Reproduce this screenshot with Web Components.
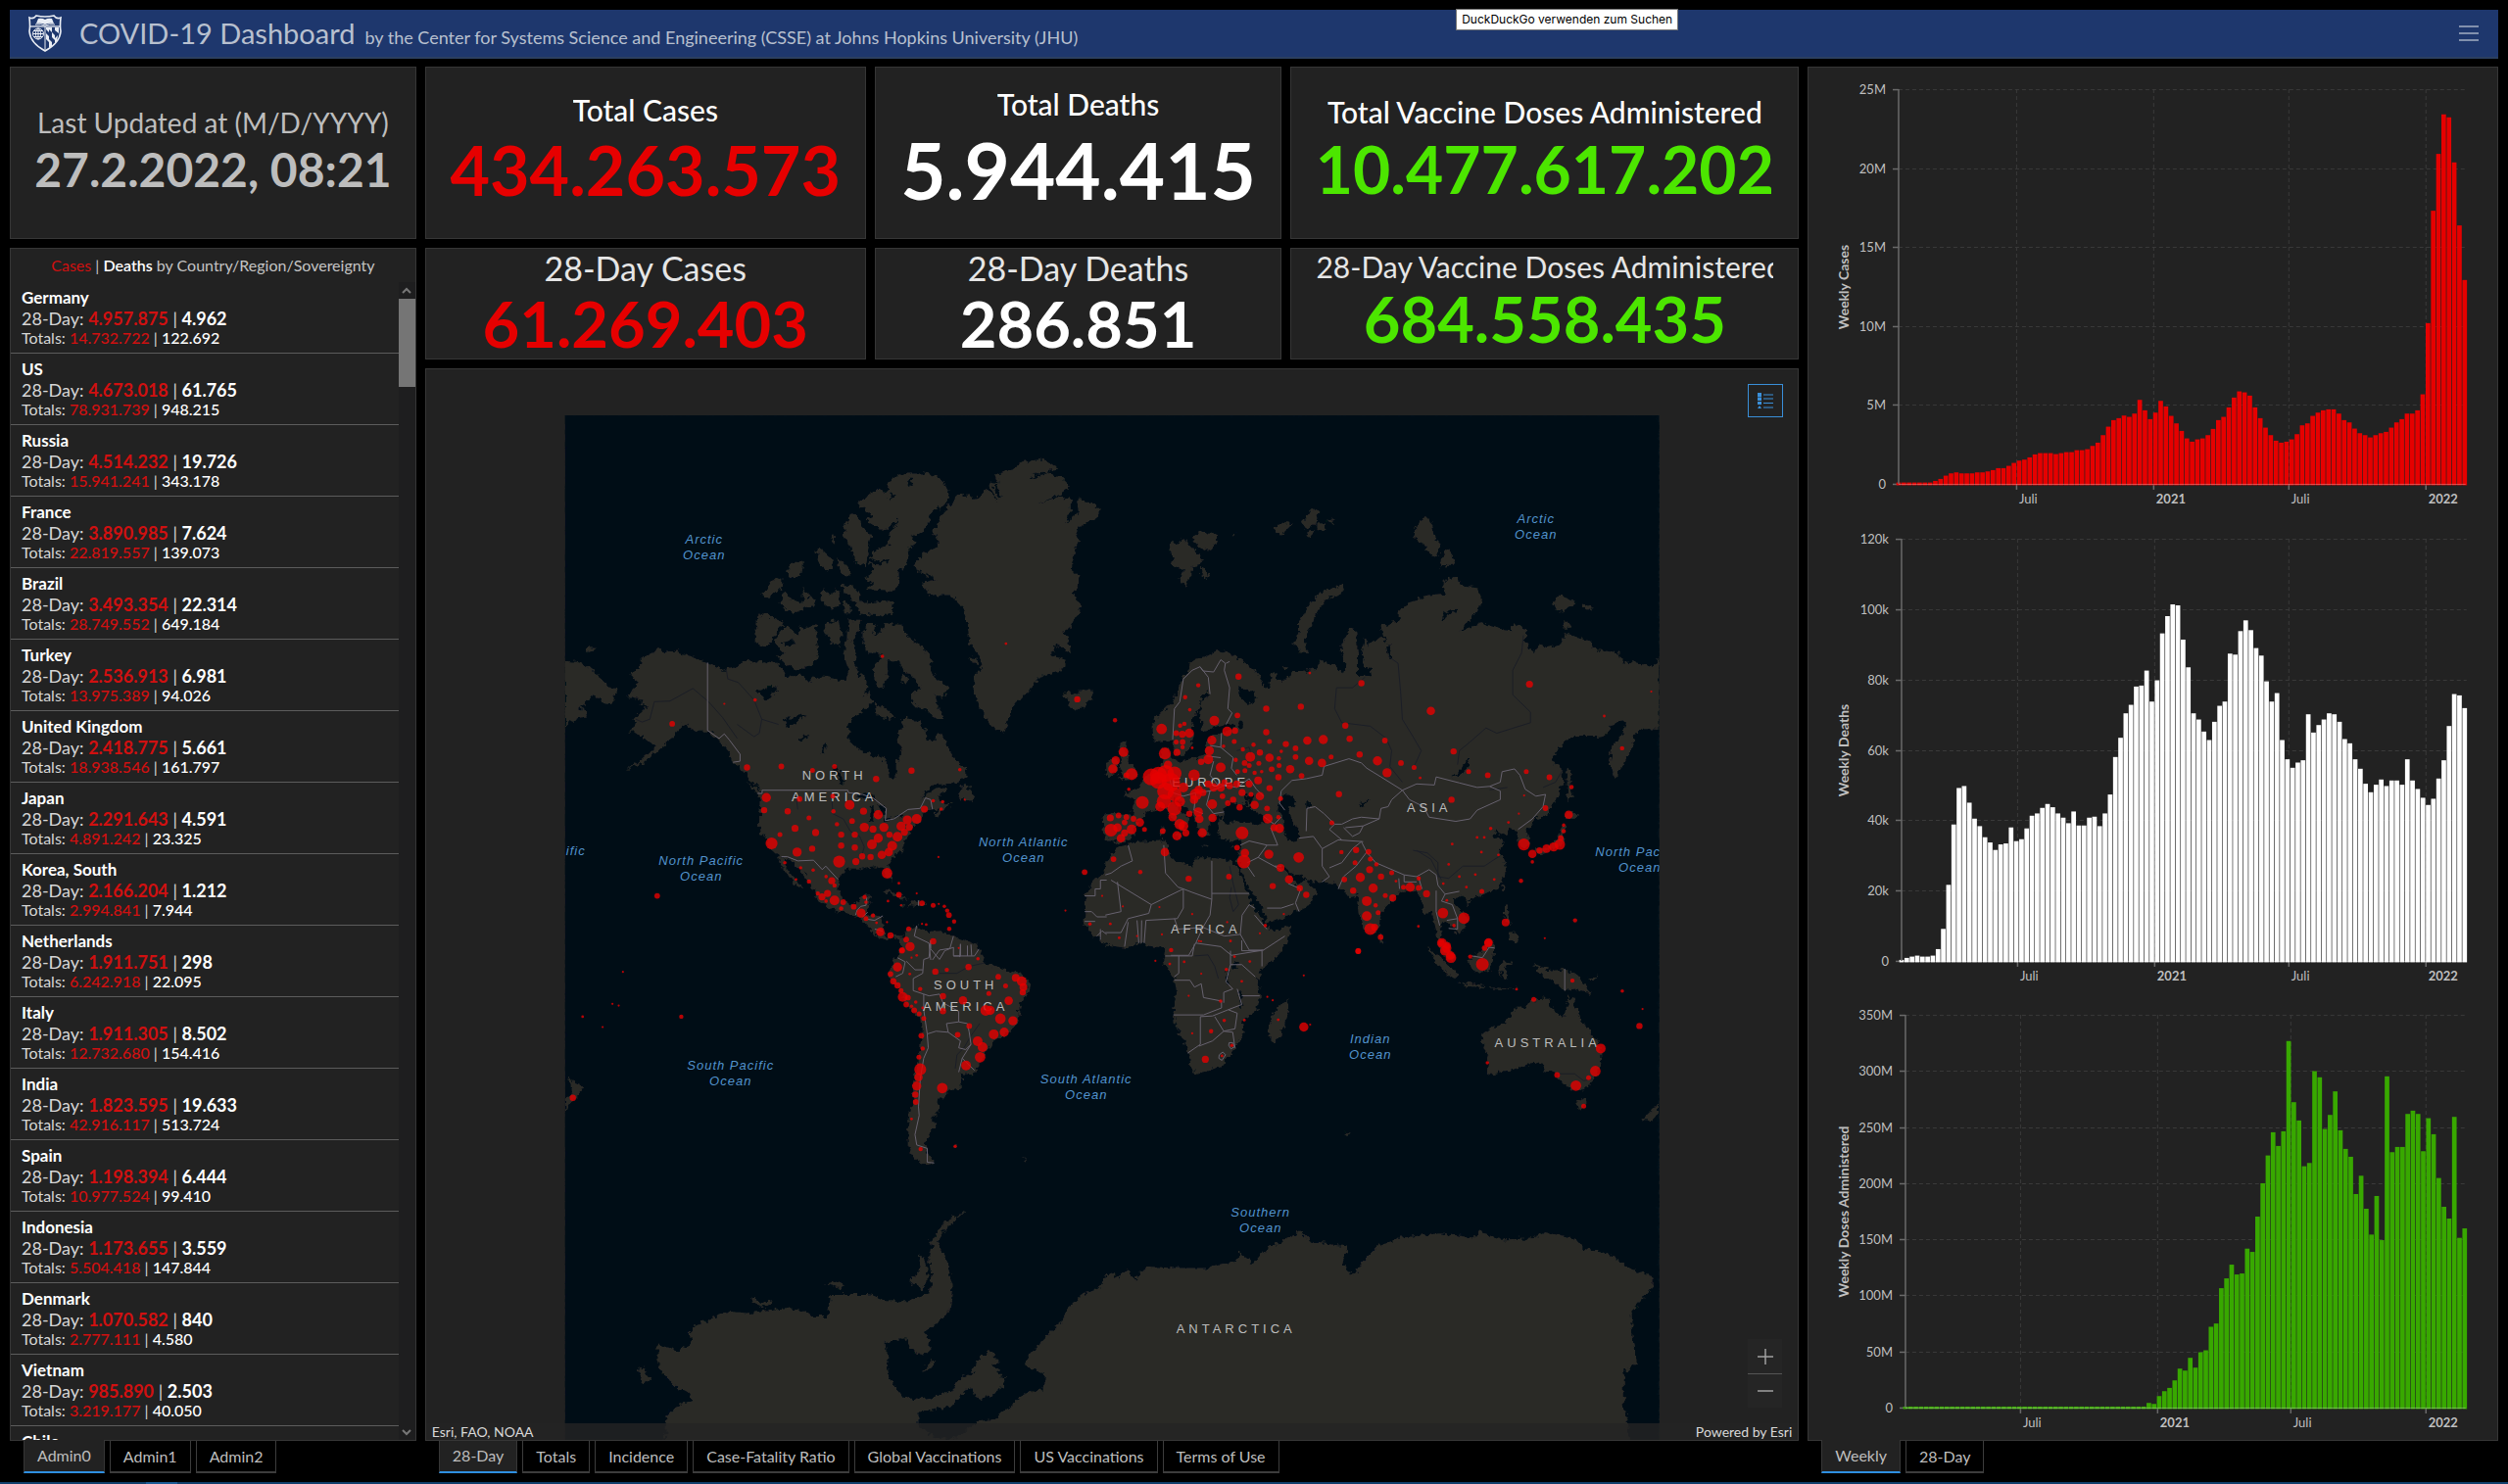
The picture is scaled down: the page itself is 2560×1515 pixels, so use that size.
<!DOCTYPE html>
<html lang="en">
<head>
<meta charset="utf-8">
<title>COVID-19 Dashboard</title>
<style>
  html, body { margin: 0; height: 100%; background: #000; overflow: hidden; }
  body { font-family: Lato, "Open Sans", sans-serif; color: #bdbdbd; }
</style>
</head>
<body>
<covid-dashboard></covid-dashboard>

<script>
const define = (name, html, setup) => {
  const template = document.createElement('template');
  template.innerHTML = html;
  customElements.define(name, class extends HTMLElement {
    constructor() {
      super();
      this.attachShadow({ mode: 'open' }).append(template.content.cloneNode(true));
    }
    connectedCallback() {
      if (setup && !this.ready) { this.ready = true; setup(this, this.shadowRoot); }
    }
  });
};

/* ---------- header ---------- */
define('dash-header', `
<style>
  :host { display: flex; align-items: center; height: 50px; box-sizing: border-box; padding: 0 18px 0 18px;
          background: #1e376d; border-bottom: 2px solid #2b3f60; color: #b8c0cf; position: relative; }
  .logo { width: 36px; height: 38px; margin-right: 17px; flex: none; }
  h1 { display: flex; align-items: baseline; gap: 10px; margin: 0; padding-top: 4px; font-weight: 400; font-size: 29px; line-height: 36px; flex: 1; }
  small { font-size: 18px; }
  button { background: none; border: 0; padding: 0; width: 24px; height: 24px; color: #a3aec2; }
  .tip { position: absolute; left: 58%; top: -1px; margin-left: 3px; background: #fff; color: #000;
         border: 1px solid #767676; box-sizing: border-box; height: 22px; line-height: 20px; padding: 0 5px;
         font-family: Inter, "Open Sans", sans-serif; font-size: 12px; white-space: nowrap; }
</style>
<svg class="logo" viewBox="0 0 36 38" aria-hidden="true">
  <path d="M2 3 Q6 5 9 1 Q18 3 27 1 Q30 5 34 3 Q33 12 34 17 Q33 29 18 37 Q3 29 2 17 Q3 12 2 3Z" fill="#1e376d" stroke="#e9edf4" stroke-width="1.6"/>
  <path d="M3 12H33" stroke="#e9edf4" stroke-width="1.3"/>
  <path d="M9 9 L11 4 Q15 3 18 5 Q21 3 25 4 L27 9 Q22 8 18 10 Q14 8 9 9Z" fill="#e9edf4"/>
  <path d="M8 10 Q14 9 18 11 Q22 9 28 10" fill="none" stroke="#e9edf4"/>
  <path d="M18 12V36" stroke="#e9edf4" stroke-width="1"/>
  <g fill="none" stroke="#e9edf4"><circle cx="11" cy="19.500" r="5.500"/><ellipse cx="11" cy="19.500" rx="2.500" ry="5.500"/><path d="M11 14V25M5.500 19.500H16.500M6.500 16.500H15.500M6.500 22.500H15.500"/></g>
  <path d="M19 13h3v5l-3-3zM22 13h3v5l3 3v5l-3-3v-5l-3-3zM28 13h4v6l-4-3zM19 19l3 3v6l-3-3zM22 25l3 3v4l-3 2zM28 24l3-3-1 6-2 2z" fill="#e9edf4"/>
</svg>
<h1><span>COVID-19 Dashboard</span><small>by the Center for Systems Science and Engineering (CSSE) at Johns Hopkins University (JHU)</small></h1>
<button type="button" aria-label="Menu"><svg width="24" height="24" viewBox="0 0 24 24"><path d="M2 5H22M2 12H22M2 19H22" stroke="currentColor" stroke-width="1.500"/></svg></button>
<span class="tip" role="tooltip">DuckDuckGo verwenden zum Suchen</span>
`);

/* ---------- indicator card ---------- */
define('stat-card', `
<style>
  :host { display: flex; flex-direction: column; align-items: center; justify-content: center; min-width: 0;
          box-sizing: border-box; padding: 0 25px 6px; background: #222; border: 1px solid #363636; text-align: center; overflow: hidden; }
  .label, .value { flex: none; white-space: nowrap; }
  .label { font-size: 30px; line-height: 40px; color: #fff; font-weight: 500; max-width: 100%; overflow: hidden; }
  .value { font-size: 70px; line-height: 82px; font-weight: 700; color: #fff; }
  :host([tone=red]) .value { color: #e60000; }
  :host([tone=green]) .value { color: #4ce600; }
  :host([size=xl]) .value { font-size: 80px; line-height: 94px; }
  :host([size=m]) .value { font-size: 66px; line-height: 78px; }
  :host([size=row]), :host([size=wide]) { padding-bottom: 0; }
  :host([size=row]) .label, :host([size=wide]) .label { color: #e6e6e6; font-weight: 400; }
  :host([size=row]) .label { font-size: 34px; }
  :host([size=wide]) .label { line-height: 34px; }
  :host([size=row]) .value, :host([size=wide]) .value { font-size: 65px; line-height: 72px; }
  :host([size=wide]) { padding-bottom: 4px; }
  :host([size=date]) { padding-left: 20px; padding-right: 20px; }
  :host([size=date]) .label { color: #bdbdbd; font-weight: 400; font-size: 28px; }
  :host([size=date]) .value { color: #bdbdbd; font-size: 48px; line-height: 56px; }
</style>
<div class="label"><slot name="label"></slot></div>
<div class="value"><slot></slot></div>
`);

/* ---------- country list ---------- */
const countries = `Germany;4.957.875;4.962;14.732.722;122.692
US;4.673.018;61.765;78.931.739;948.215
Russia;4.514.232;19.726;15.941.241;343.178
France;3.890.985;7.624;22.819.557;139.073
Brazil;3.493.354;22.314;28.749.552;649.184
Turkey;2.536.913;6.981;13.975.389;94.026
United Kingdom;2.418.775;5.661;18.938.546;161.797
Japan;2.291.643;4.591;4.891.242;23.325
Korea, South;2.166.204;1.212;2.994.841;7.944
Netherlands;1.911.751;298;6.242.918;22.095
Italy;1.911.305;8.502;12.732.680;154.416
India;1.823.595;19.633;42.916.117;513.724
Spain;1.198.394;6.444;10.977.524;99.410
Indonesia;1.173.655;3.559;5.504.418;147.844
Denmark;1.070.582;840;2.777.111;4.580
Vietnam;985.890;2.503;3.219.177;40.050
Chile`.split('\n').map(r => r.split(';'));

define('country-list', `
<style>
  :host { display: flex; flex-direction: column; min-height: 0; box-sizing: border-box; background: #222; border: 1px solid #363636; }
  h2 { margin: 0; font-size: 16px; line-height: 34px; font-weight: 400; text-align: center; color: #c4c4c4; }
  h2 b { font-weight: 600; color: #fff; } h2 i { font-style: normal; color: #d01010; }
  .body { flex: 1; min-height: 0; display: flex; }
  ul { flex: 1; margin: 0; padding: 0; list-style: none; overflow: hidden; }
  li { height: 73px; box-sizing: border-box; border-bottom: 1px solid #5c5c5c; padding: 6px 11px; color: #d6d6d6; }
  .name { font-weight: 700; color: #fff; font-size: 17px; line-height: 20px; }
  .d28 { font-size: 18px; line-height: 22px; } .tot { font-size: 16px; line-height: 17px; }
  .d28 b { font-weight: 700; } .tot b { font-weight: 500; }
  b { color: #fff; } b.c { color: #d01010; }
  .bar { width: 17px; background: #1e1e1f; display: flex; flex-direction: column; }
  .bar button { height: 17px; padding: 0; border: 0; background: none; color: #777; display: grid; place-items: center; }
  .thumb { height: 90px; background: #757575; } .rest { flex: 1; }
</style>
<h2><i>Cases</i> | <b>Deaths</b> by Country/Region/Sovereignty</h2>
<div class="body"><ul></ul>
  <div class="bar">
    <button type="button" aria-label="Scroll up"><svg width="10" height="8" viewBox="0 0 10 8"><path d="M1 6 5 2 9 6" fill="none" stroke="currentColor" stroke-width="2"/></svg></button>
    <div class="thumb"></div><div class="rest"></div>
    <button type="button" aria-label="Scroll down"><svg width="10" height="8" viewBox="0 0 10 8"><path d="M1 2 5 6 9 2" fill="none" stroke="currentColor" stroke-width="2"/></svg></button>
  </div>
</div>
`, (host, root) => {
  root.querySelector('ul').innerHTML = countries.map(([n, c, d, tc, td]) =>
    `<li><div class="name">${n}</div>` + (c ? `<div class="d28">28-Day: <b class="c">${c}</b> | <b>${d}</b></div><div class="tot">Totals: <b class="c">${tc}</b> | <b>${td}</b></div>` : '') + '</li>').join('');
});

/* ---------- tabs ---------- */
define('tab-strip', `
<style>
  :host { display: block; height: 33px; padding-left: 14px; }
  nav { display: flex; gap: 5px; height: 100%; }
  button { font: 400 16px/30px Lato, "Open Sans", sans-serif; color: #bdbdbd; background: #000; padding: 0 13px; box-sizing: border-box;
           border: 1px solid #3c3c3c; border-top: 0; border-bottom-width: 2px; white-space: nowrap; }
  button[aria-selected=true] { background: #222; border-color: #363636; border-bottom: 2px solid #2f8fe0; margin-top: -1px; }
</style>
<nav role="tablist"></nav>
`, (host, root) => {
  root.querySelector('nav').innerHTML = host.getAttribute('items').split('|')
    .map((t, i) => `<button type="button" role="tab" aria-selected="${i === 0}">${t}</button>`).join('');
});

/* ---------- weekly bar chart ---------- */
define('weekly-chart', `
<style>
  :host { display: block; min-height: 0; }
  svg { display: block; width: 100%; height: 100%; }
  text { font: 400 13px Lato, "Open Sans", sans-serif; fill: #bfbfbf; }
  .b { font-weight: 700; } .title { font-size: 14px; font-weight: 700; }
  .grid { stroke: #3a3a3a; stroke-dasharray: 4 3; fill: none; }
  .axis { stroke: #6a6a6a; fill: none; stroke-width: 1.500; }
</style>
<svg viewBox="0 0 703 467" role="img"></svg>
`, (host, root) => {
  const a = n => +host.getAttribute(n);
  const left = a('left'), top = a('top'), base = a('base'), max = a('max'), unit = host.getAttribute('unit');
  const step = a('step'), color = host.getAttribute('color'), right = 670;
  const values = host.textContent.trim().split(/\s+/).map(Number);
  const pitch = (right - left) / (values.length - 1), h = base - top;
  let s = '';
  for (let v = 0; v <= max; v += step) {
    const y = Math.round(base - v / max * h);
    s += `<path class="grid" d="M${left} ${y}.500H672"/><path class="axis" d="M${left - 6} ${y}.500h6"/>` +
         `<text x="${left - 13}" y="${y + 5}" text-anchor="end">${v ? v + unit : 0}</text>`;
  }
  const marks = host.getAttribute('marks').split(' ').map(Number);
  ['Juli', '2021', 'Juli', '2022'].forEach((t, i) => {
    s += `<path class="grid" d="M${marks[i]}.500 ${top}V${base}"/><path class="axis" d="M${marks[i]}.500 ${base}v6"/>` +
         `<text x="${marks[i] + 3}" y="${base + 20}" class="${i % 2 ? 'b' : ''}">${t}</text>`;
  });
  const scale = a('scale');
  values.forEach((v, i) => {
    const bh = Math.max(v / scale * h, 1);
    s += `<rect x="${(left + i * pitch - 2.3).toFixed(2)}" y="${(base - bh).toFixed(2)}" width="4.7" height="${(bh + 1.5).toFixed(2)}" fill="${color}"/>`;
  });
  s += `<path class="axis" d="M${left} ${top}V${base}" /><path d="M${left} ${base}.500H671" stroke="#fff" stroke-opacity=".3"/>`;
  s += `<text class="title" transform="translate(41 ${a('mid')}) rotate(-90)" text-anchor="middle">${host.getAttribute('label')}</text>`;
  root.querySelector('svg').innerHTML = s;
});

/* ---------- world map ---------- */
const mapParts = [
  { x: 570, y: 420, sx: .3571, sy: .3571,
    land: `M20 714L55 716 80 725 105 747 130 768 140 785 165 790 172 800 160 815 152 835 130 832 118 820 95 812 80 835 60 850 78 855 82 872 55 878 38 888 20 902ZM76 685L90 672 108 675 106 684 85 688Z
M207 745L232 735 235 712 262 692 292 678 310 690 330 684 380 700 427 718 455 728 475 742 490 728 500 735 520 722 540 708 555 718 572 712 590 722 600 715 625 722 650 745 655 762 690 752 715 772 730 758 760 758 790 765 822 768 830 750 845 722 855 735 862 760 868 748 880 765 884 790 872 815 890 800 898 830 872 855 840 880 830 900 832 940 860 965 900 982 938 995 940 1030 950 1048 965 1045 967 1000 985 975 975 945 972 915 990 900 978 880 1010 878 1035 890 1050 910 1052 935 1072 945 1090 920 1110 950 1122 975 1140 1000 1165 1020 1168 1045 1130 1065 1075 1067 1050 1085 1035 1110 1060 1090 1085 1075 1115 1078 1100 1090 1085 1100 1100 1120 1128 1122 1105 1135 1085 1155 1072 1150 1090 1135 1060 1140 1045 1150 1038 1175 1015 1185 1005 1205 990 1225 985 1250 960 1275 942 1300 955 1325 955 1340 940 1340 928 1310 905 1300 875 1305 860 1310 825 1310 805 1330 800 1370 815 1400 850 1410 870 1385 895 1385 885 1415 885 1440 925 1442 930 1470 925 1490 940 1502 960 1495 985 1500 990 1515 960 1505 935 1512 905 1495 870 1455 845 1440 800 1430 745 1405 735 1375 700 1320 665 1285 640 1275 650 1300 680 1340 700 1362 690 1365 660 1330 635 1290 628 1270 600 1245 590 1215 575 1190 575 1150 580 1110 565 1085 585 1090 570 1070 545 1050 525 1020 500 1005 490 975 455 935 430 915 395 915 370 900 355 895 345 910 330 925 315 945 280 975 250 1000 190 1028 240 995 280 960 270 950 235 930 215 915 200 915 222 900 215 880 235 860 262 845 235 840 240 825 200 818 195 812 215 795 230 775 212 760Z
M570 585L590 580 640 598 648 612 625 625 610 655 590 675 580 668 563 655ZM617 655L640 625 655 612 690 640 690 615 710 622 728 605 742 608 738 640 745 690 735 720 710 732 680 738 655 725 625 700 650 692 632 680ZM585 522L610 485 640 475 640 500 620 520 600 535ZM630 545L650 515 670 540 700 545 700 500 715 530 738 540 725 560 700 565 670 580 650 562ZM653 460L670 435 700 422 700 445 695 470 670 475ZM738 400L750 395 785 425 790 445 770 458 750 440ZM797 418L825 440 835 470 805 465ZM745 520L760 505 775 525 800 510 803 555 780 565 760 550ZM815 545l20 5 3 25-20 0ZM812 495L840 500 860 520 870 548 960 540 955 575 920 583 860 578 850 545 820 520ZM782 355l10 0 2 14-8 6Z
M835 290L855 300 870 335 895 350 888 380 880 445 850 430 840 390 815 355 822 325ZM855 265L880 245 915 220 940 232 945 200 985 178 1045 178 1085 185 1120 225 1110 260 1060 315 1040 345 1010 360 1025 375 1000 395 1003 430 975 455 972 505 950 515 880 510 900 490 875 480 905 455 890 430 900 400 945 380 950 350 900 340 870 310 900 300Z
M762 610L785 598 805 600 812 640 800 670 780 660 765 630ZM828 598L865 595 860 625 840 655 850 700 850 740 830 740 815 690 825 650ZM885 605L910 605 900 650 925 625 935 608 985 610 990 635 1030 665 1068 705 1062 735 1085 765 1115 790 1100 820 1075 810 1090 850 1100 880 1070 870 1050 850 1020 840 1005 815 1035 790 1020 760 985 740 975 715 940 715 915 690 885 690 870 660 870 630ZM925 700L945 720 940 765 920 795 905 770 900 730ZM905 835L940 850 965 875 945 882 910 870ZM985 755l20 10-10 15-15-10ZM1140 1095L1165 1060 1175 1080 1192 1100 1185 1112 1145 1105ZM540 1062l30 15 12 15-15-2Z
M1120 265L1145 240 1185 235 1190 255 1225 220 1255 255 1230 200 1260 205 1250 180 1300 165 1330 145 1385 136 1430 162 1400 175 1440 190 1465 215 1440 235 1370 265 1425 245 1465 248 1465 285 1450 320 1490 285 1485 250 1525 262 1553 280 1535 310 1490 325 1480 345 1488 370 1470 420 1468 455 1492 470 1490 500 1470 520 1495 555 1480 590 1465 620 1440 630 1460 645 1465 695 1420 665 1410 700 1450 710 1440 740 1375 758 1360 785 1325 815 1295 850 1285 885 1272 920 1250 910 1225 880 1205 845 1187 800 1190 755 1210 735 1205 700 1175 665 1170 600 1155 560 1120 525 1065 525 1035 490 1080 480 1025 455 1020 430 1045 405 1090 385 1088 365 1068 350 1090 305ZM1440 815L1455 800 1475 810 1490 797 1525 797 1530 820 1490 855 1460 845 1465 828ZM1178 700l20 8 2 18-18-8Z
M920 1375L945 1367 975 1382 1000 1396 985 1397 945 1378ZM1010 1398L1035 1400 1055 1410 1030 1415 1005 1412ZM973 1411l20 2-8 4ZM965 1570L980 1540 985 1510 1000 1475 1025 1470 1060 1490 1100 1488 1130 1500 1160 1520 1195 1525 1215 1570ZM1572 1290L1550 1325 1530 1345 1505 1385 1508 1440 1505 1470 1530 1500 1572 1525Z`,
    water: `M565 800l25-8 15-8 25 2-8 20-15 4-12 14-12-6ZM640 878l30 0 20-12 18 4-20 12-20 16-12 2ZM685 940l15-14 22 2-12 8-20 8ZM752 975l10-25 8 4-8 24ZM782 1015l12-5 12 20 10 35-8 0-10-28ZM850 1098l28-8 22 8 4 12-30-4ZM893 1130l12-4-2 40-12 6ZM912 1120l20 8 2 20-12 4ZM930 1168l28-8 0 6-24 8ZM965 1158l24-6-2 6-22 4ZM1060 300l25-25 12 5-30 35ZM868 300l24 20 30 18 24-4 26-30-6 26-24 20-44-2-30-22ZM955 230l-12 22 4 4 14-22ZM1000 190l8 28 6-2-6-26ZM892 420l30 10 26-10-20 18-30-2ZM640 660l30-6 8 10-30 8ZM1245 210l14 40 6-4-10-36ZM1345 188l40-14 38-8-36 14-40 12Z`,
    borders: `M427 718V912L460 935 475 922 490 940 520 980 520 1000 500 1003M570 1092L583 1092 583 1083H828L830 1090 870 1095 900 1105 938 1135 935 1170 960 1165 1000 1138 1035 1135 1050 1105 1065 1110 1070 1138M638 1273L655 1273 685 1285 730 1283 755 1310 765 1300 800 1338M850 1440L855 1425 865 1415 880 1412 882 1390M870 1445L885 1432M885 1452L905 1455 928 1442M905 1480L928 1486M1025 1470L1018 1500 1060 1520 1065 1568M1130 1500L1120 1535 1090 1540 1070 1568M1030 1398V1413M1150 1522L1148 1560M1180 1524L1182 1556M1505 1385h30v-20h15v-25h18M1505 1430h20l15 15h28M1505 1458h30M1540 1500l15-15 13 10M1550 1510v-30`,
    rivers: `M222 880L240 888 262 880 275 830 320 828 385 792 430 830 470 875 512 935M480 735L485 765 515 775 560 825 582 880 575 920 560 930 512 895M582 880L630 895M680 1100L685 1138M782 1100L785 1150 815 1165 835 1200 862 1215 875 1245 868 1270`,
    dots: `326 893 8,540 1018 9,638 1015 8,727 1026 7,790 1015 7,909 1051 9,1010 1027 9,1148 1024 5,595 1104 13,589 1140 9,656 1143 9,690 1108 8,785 1100 7,833 1125 14,787 1143 6,717 1162 7,840 1171 8,873 1143 10,915 1153 13,797 1180 6,875 1189 13,900 1194 10,931 1189 13,980 1186 13,998 1168 13,1025 1165 14,1047 1137 10,1004 1189 10,990 1203 10,970 1216 14,947 1210 9,915 1220 13,897 1238 14,955 1242 14,945 1260 12,925 1268 12,893 1274 9,869 1272 9,851 1287 10,848 1247 9,848 1210 9,809 1210 9,809 1241 9,736 1204 10,677 1192 10,634 1210 7,610 1235 17,683 1260 13,726 1250 9,803 1287 17,940 1320 15,693 1305 5,729 1311 5,717 1344 6,766 1330 5,782 1342 10,790 1355 6,648 1290 5,680 1338 4,742 1378 6,754 1388 10,770 1378 10,766 1400 5,790 1398 14,815 1403 8,809 1421 6,845 1416 8,876 1388 6,880 1403 5,866 1434 13,880 1450 7,900 1441 6,921 1488 12,950 1498 9,974 1382 8,943 1400 4,1040 1406 8,1072 1412 7,1088 1408 3,1104 1415 5,1112 1427 6,1117 1440 8,1132 1458 6,1118 1479 6,974 1349 4,1087 1274 3,1072 1113 5,1099 1116 5,1095 1137 5,283 1385 8,1484 823 9,1505 1317 8,1280 664 4,475 836 3,563 825 5,927 700 5,1002 1479 7,995 1510 8,1006 1530 13,983 1540 8,1072 1515 9,1450 1427 3,1025 1555 4,1162 1110 3,1520 1465 5,1555 1385 3,910 1462 4,940 1460 3,1025 1378 3,980 1412 3,1040 1465 3,1052 1467 4` },
  { x: 1130, y: 420, sx: .3635, sy: .3571,
    land: `M180 375L200 380 215 362 225 378 240 385 250 400 270 425 260 440 240 445 225 505 205 480 215 455 180 435 190 420 175 400ZM240 360L265 340 290 350 313 352 305 385 280 397 255 385ZM262 445l20 5 8 20-12 12-15-18ZM470 335l25-20 28 5-20 20-15 15ZM548 320l30-45 15 15-5 30-25 20ZM590 320l18 0 2 18-18 2ZM620 310l20-5-5 18ZM560 350l20-10 0 12-15 6ZM355 352l10-6-3 10ZM880 310L900 297 915 330 918 355 935 370 932 415 905 405 890 378 868 370 862 345ZM935 450L945 405 962 392 980 438 955 440ZM525 660L540 625 540 600 565 555 600 520 650 500 665 495 670 510 645 525 610 540 590 575 575 610 560 640 557 670 568 692 545 690ZM1255 540L1270 525 1295 535 1320 548 1300 560 1275 573 1260 565ZM1335 550l30 10-5 12-25-10ZM1280 605l15-5 12 18-25 0ZM495 730l12 2-4 10Z
M128 885L155 860 185 830 205 780 230 730 245 708 270 705 310 685 345 690 380 712 410 735 435 765 430 795 400 800 370 785 375 820 400 840 420 820 410 790 440 780 455 790 460 750 475 745 478 765 500 770 520 745 550 745 590 735 600 710 640 725 665 750 670 725 655 680 670 650 680 620 700 625 705 690 705 760 725 755 745 760 740 735 725 730 715 690 725 645 735 670 770 645 790 665 795 690 770 615 820 600 820 570 860 540 905 525 950 520 945 490 970 468 990 485 1000 500 1040 505 1053 545 1025 590 990 630 1050 605 1100 620 1135 628 1140 605 1165 615 1185 640 1170 650 1200 690 1215 665 1235 675 1275 668 1285 635 1320 645 1360 655 1365 680 1440 690 1448 715 1500 720 1530 730 1551 710 1551 910 1510 908 1480 925 1475 960 1450 1010 1425 1052 1412 1000 1420 950 1450 920 1460 885 1425 890 1400 925 1380 930 1300 930 1245 1000 1275 1015 1283 1060 1260 1110 1240 1150 1200 1165 1180 1200 1188 1235 1165 1250 1155 1230 1150 1200 1130 1195 1120 1215 1095 1200 1080 1215 1105 1225 1120 1235 1100 1250 1115 1275 1122 1320 1100 1360 1060 1380 1035 1390 1010 1400 1000 1385 975 1390 975 1405 1000 1430 1015 1455 1005 1480 985 1495 970 1470 945 1460 935 1475 940 1510 960 1540 975 1570 955 1570 930 1520 925 1480 910 1430 890 1435 885 1400 870 1375 850 1370 830 1372 800 1400 770 1430 765 1470 745 1495 730 1490 710 1440 705 1385 680 1390 660 1365 640 1350 600 1345 560 1340 545 1325 520 1320 495 1300 485 1285 500 1310 520 1335 535 1355 560 1340 565 1345 590 1375 570 1410 530 1430 480 1455 450 1462 440 1430 405 1370 380 1315 375 1300 365 1285 375 1245 380 1225 350 1230 320 1225 310 1185 325 1150 300 1165 285 1180 285 1215 265 1215 250 1170 230 1140 210 1120 185 1100 190 1125 215 1150 235 1165 220 1180 215 1210 195 1180 165 1140 150 1130 130 1140 110 1145 100 1165 80 1185 70 1220 40 1235 10 1225 -5 1225 -12 1160 10 1150 70 1155 75 1110 50 1090 85 1080 110 1040 150 1020 155 985 150 970 170 960 180 990 200 1000 250 990 275 985 280 950 290 930 320 920 360 905 355 890 320 900 270 915 262 875 265 830 290 810 285 800 265 810 262 845 245 870 240 900 245 930 235 960 215 985 195 985 180 940 160 945 135 945 130 920Z
M30 970L40 945 55 945 50 965 62 980 60 1000 80 1020 88 1040 60 1055 30 1050 45 1040 35 1015 45 1000ZM-2 1005L20 990 32 995 30 1030 0 1045ZM1285 1165L1295 1140 1325 1155 1300 1170ZM1290 1180L1280 1240 1220 1265 1195 1255 1240 1245 1270 1215 1280 1180ZM1292 1020L1305 1030 1300 1075 1308 1100 1295 1118 1293 1070ZM765 1490l12 8 0 20-10 2ZM150 1190l12-2-2 25-8 0ZM185 1210l25-3-3 15ZM265 1240l20 0-5 5ZM345 1243l15-3-5 8ZM1115 1410l10 0 2 30 12 25-12-5-12-20ZM1130 1490l20-5 8 25-12 12-15-8ZM1112 1350l8 5-5 22-6-8ZM1008 1402l16-2-4 12-10-2ZM897 1530l20 10 20 30-12 0Z
M-4 1290L20 1260 40 1240 80 1232 150 1228 165 1225 175 1270 200 1290 240 1300 250 1275 290 1275 340 1285 365 1295 385 1350 405 1400 420 1425 445 1470 465 1485 518 1472 505 1520 470 1570 170 1570 165 1535 130 1530 90 1520 60 1535 -4 1525Z`,
    water: `M325 1168L330 1135 345 1112 370 1125 395 1118 400 1135 440 1160 455 1172 420 1180 370 1172 340 1178ZM385 1100l30-8-5 18-15 5ZM485 1115L500 1092 525 1100 530 1125 510 1135 520 1170 540 1195 540 1225 510 1230 498 1200 495 1165 480 1140ZM970 1048L995 1025 1018 985 1020 1000 1000 1035ZM942 575l20-5 18-8 0 10-20 8-16 20ZM560 1115l10 0 0 18-10 0ZM710 1120l15-6 16 2-16 4-8 14ZM785 665l10 0 4 40-8 0ZM370 890l12 0 0 15-10 0ZM395 1115l14-5 0 8Z`,
    borders: `M185 938L190 850 205 830 215 765 240 740 262 730 270 742 300 745 320 710 333 720 330 740 345 790 340 850 352 862 335 895M262 730L285 760 290 808M335 720L345 715M322 920L320 960 355 990 350 1020 365 1040M290 955L320 960M280 985L320 990M300 1000L290 1040 310 1065 365 1075 400 1050M175 1040L185 1090 215 1100 250 1090 290 1085 330 1070M250 1090L245 1140 270 1150M290 1085L280 1125 300 1150 330 1145M400 1050L420 1080 440 1100M440 1158L470 1180 490 1160M460 1190L480 1240 450 1240 400 1228 375 1240M450 1240L425 1275 395 1290M425 1275L470 1300 490 1300M395 1300L415 1330M470 1300L490 1312M510 1350L545 1365 530 1405 540 1430M450 1420L490 1420 525 1408M490 1085L520 1055 560 1050 605 1040 610 1015 680 993 715 1005 730 1020 770 1045 830 1083 800 1110 790 1130 770 1135 765 1165 715 1160 690 1165M490 1085L485 1120 500 1140M560 1200L562 1135 585 1130 610 1150 640 1180 660 1180 690 1165M540 1220L580 1215 605 1250 605 1300 625 1330 605 1345M605 1250L650 1225 720 1230M640 1180L625 1195 660 1225M670 1190L720 1185 765 1165M625 1305L660 1290 690 1250 715 1230M665 1190L690 1215 710 1205 720 1185M830 1083L870 1065 920 1068 925 1045 990 1062 1040 1075 1075 1072 1105 1085 1105 1110 1040 1140 1020 1165 980 1172 905 1160 890 1130 850 1110 830 1083M1075 1072L1105 1060 1110 1030 1145 1022 1160 1040 1175 1080 1205 1100 1232 1095 1225 1130 1195 1165 1155 1195M715 1230L730 1260 755 1290 835 1325 870 1330 905 1310 925 1325 930 1355 950 1380 990 1372M835 1325L835 1345 870 1345M650 1365L665 1330 700 1300 730 1260M820 1335L822 1365M875 1330L885 1365M925 1370L925 1430 935 1470M950 1380L940 1400 970 1410 985 1450M955 1455L985 1450 985 1480 960 1478M60 1240L72 1285 40 1300 12 1320-4 1325M12 1340L125 1410 215 1365 240 1375 295 1395 295 1285M295 1378H400M160 1240L165 1320 200 1360 215 1365 215 1420 198 1450M30 1345L40 1430-4 1440M125 1410L118 1435 60 1450 40 1490-4 1490M198 1450L110 1455 105 1520M295 1395L290 1440 270 1475 200 1480 190 1450M270 1475L330 1500 375 1495 380 1440 400 1410 415 1420M375 1495L400 1540 440 1540 500 1500M270 1475L250 1520 320 1530 350 1555 440 1540M180 1555H230L250 1520M415 1440L440 1470 450 1480M85 1455L90 1520M98 1455L97 1520M60 1460L50 1530`,
    rivers: `M725 760L690 790 645 790 640 850 660 890 740 900 785 935 800 970 795 1015 830 1060M790 700L818 720 825 800 830 880 860 930 883 970 870 1000 860 1020M1170 640L1165 690 1140 740 1140 810 1190 860 1190 890 1095 920 1065 905 1020 945 990 970 985 1010M860 1255L900 1262 930 1290 930 1330 960 1335 1000 1300 1060 1300 1105 1270M870 1255L910 1280 940 1340M1280 1025L1260 1060 1225 1075M1075 1082L1125 1075M345 1300L355 1350 370 1410 355 1430 345 1390 350 1360M365 970L400 960 410 1000`,
    dots: `154 908 15,302 884 14,370 758 9,257 783 6,220 817 6,233 853 5,367 869 8,338 915 14,360 913 9,295 940 13,288 970 13,285 995 14,265 1002 9,320 1018 14,245 1040 16,232 920 13,212 923 10,218 893 6,206 898 6,195 920 8,195 945 7,213 945 8,197 975 10,213 960 6,240 962 4,23 883 6,47 974 14,25 998 12,17 1022 13,70 1037 17,55 1040 8,62 1080 5,163 978 17,100 1118 18,125 1045 24,145 1040 24,165 1035 24,190 1035 20,172 1010 12,145 1055 24,180 1060 26,165 1085 24,190 1095 20,160 1115 20,205 1115 15,190 1135 20,150 1130 14,185 1160 12,205 1180 15,215 1185 14,222 1205 10,197 1213 13,250 1095 17,215 1075 14,245 1110 12,270 1090 10,258 1082 12,257 1145 13,260 1165 12,232 1150 9,268 1205 13,296 1123 14,297 1162 12,325 1100 8,320 1075 12,345 1070 10,300 1075 12,285 1065 10,355 1110 9,340 1120 8,373 1132 9,380 1090 10,400 1065 10,365 1065 10,330 1060 8,425 1055 11,430 1100 12,415 1125 12,405 1095 7,457 1077 9,450 1135 8,452 1164 14,470 1190 10,485 1192 13,488 1107 7,482 1160 6,482 1046 9,515 1023 12,547 1042 8,568 999 12,604 1005 12,563 941 12,608 938 13,682 936 9,670 898 9,710 981 9,760 999 13,787 1033 13,826 1005 8,863 1018 7,781 941 8,630 988 7,715 777 9,545 844 9,448 850 9,448 917 9,457 944 7,503 951 9,530 963 8,530 988 8,490 972 5,412 953 6,403 988 14,430 975 9,457 990 12,483 992 6,484 1012 7,463 1023 8,387 1005 8,427 1006 7,400 1012 7,415 1033 6,435 1030 5,382 966 6,358 944 7,328 957 5,362 996 6,367 1030 7,388 1027 7,910 856 12,1187 780 10,1178 1030 7,1243 1046 8,1070 1040 8,1016 1030 7,974 972 9,968 1110 9,652 1094 9,1305 1074 6,1232 1134 8,1297 1153 12,1447 963 6,1529 801 3,1397 871 4,570 748 4,380 1205 18,455 1266 13,539 1275 15,488 1305 11,512 1338 12,542 1363 9,560 1382 9,466 1357 9,385 1287 19,388 1262 12,366 1247 8,343 1330 8,230 1336 9,94 1317 6,163 1260 12,19 1280 8,10 1162 10,33 1155 8,55 1160 8,75 1165 8,50 1175 8,93 1175 12,12 1197 18,70 1195 14,50 1205 10,40 1220 12,30 1190 12,106 1195 7,157 1200 8,632 1176 7,659 1260 6,700 1254 9,735 1259 8,740 1280 7,697 1290 7,738 1310 10,757 1295 6,770 1330 9,800 1319 7,712 1332 13,748 1363 13,692 1370 9,667 1338 8,730 1400 14,782 1384 7,803 1391 10,755 1412 6,730 1443 14,762 1433 7,740 1480 17,752 1475 10,769 1503 8,852 1360 13,876 1362 8,876 1335 6,833 1360 7,812 1343 4,898 1379 10,944 1434 15,1003 1449 16,1053 1372 7,706 1543 8,1120 1461 11,1072 1518 12,1315 1455 6,1163 1342 6,1171 1238 17,1195 1265 12,1215 1255 9,1235 1250 12,1255 1245 13,1272 1238 15,1275 1220 8,1283 1200 6,1283 1183 5,1195 1288 5,940 1520 9,955 1535 13,965 1555 12,445 1470 5,1040 1218 4,1078 1192 5,1100 1268 4,1035 1324 4,990 1330 4,960 1295 4,970 1237 4,1060 1218 4,1052 1260 4,1010 1360 4,1157 1150 3,1128 1175 4,1172 1098 3,1088 1338 4,945 1350 4,880 1048 4,875 1472 4,1230 1506 3,240 1437 3,338 1460 3,148 1417 3,45 1415 3,85 1500 3,155 1495 3,265 1515 3,430 1492 3,497 1437 3,10 1465 4,35 1505 4,975 1470 5,955 1398 4` },
  { x: 570, y: 960, sx: .3571, sy: .354,
    land: `M975-5L1150-5 1190 10 1210 40 1218 65 1265 80 1320 95 1348 120 1345 145 1320 185 1312 240 1275 278 1245 290 1225 320 1205 360 1185 388 1150 385 1158 400 1150 425 1110 432 1105 455 1090 460 1085 500 1065 515 1080 535 1060 560 1050 590 1060 620 1075 642 1045 645 1015 625 1000 590 998 545 1005 500 1015 460 1015 400 1030 340 1040 270 1035 225 1000 190 975 145 950 110 945 90 965 50 980 20ZM1128 592l15 0-5 8ZM28 390L45 410 72 422 60 445 35 470 22 492 20 460 38 440ZM1325 628l10 2 2 8Z
M305 1450L310 1370 335 1345 385 1325 370 1300 345 1295 310 1260 285 1225 285 1165 345 1185 380 1160 375 1130 400 1105 450 1085 485 1070 540 1075 610 1065 650 1060 700 1065 725 1085 770 1085 780 1020 820 1020 890 1020 940 1040 1000 1040 1060 1020 1068 980 1060 920 1070 880 1055 870 1075 855 1095 820 1165 780 1110 830 1085 870 1110 920 1128 1000 1120 1070 1075 1110 1045 1130 1062 1150 1060 1190 1035 1195 1005 1180 990 1145 935 1160 945 1260 985 1315 1030 1325 1080 1315 1130 1295 1140 1270 1185 1245 1195 1215 1230 1180 1260 1215 1235 1228 1270 1235 1250 1250 1280 1260 1275 1285 1215 1325 1190 1310 1175 1285 1120 1345 1030 1360 1030 1395 1070 1430 1130 1440 1170 1410 1200 1388 1250 1380 1330 1310 1375 1295 1385 1305 1390 1250 1340 1230 1335 1210 1400 1135 1440 1100 1455 1060 1500 1020 1550 1000 1572 960 1572 1450ZM225 1240l15-10 25 40-20 8ZM550 1025l30 20 30-5-15 20-40-15ZM765 990l30-8 28 12-20 10ZM1005 975L1030 965 1035 905 1055 940 1055 985 1040 1005 1005 985ZM1040 1240l30-28 10 0-15 20-20 12Z`,
    water: ``,
    borders: `M1065 0L1065 25 1090 55 1105 30 1130 20 1130 45 1150 45 1150 12M1170 15V45M1130 45L1190 45 1203 25M1065 0L1060 50 1045 55 1042 95 1015 110 1015 145 1045 155 1060 160 1090 155 1100 180 1145 205 1145 235 1170 240 1175 265 1180 300 1165 315 1145 310 1150 290 1115 265 1110 240 1145 235M995 60L1020 85 1042 85M970 50L992 62 985 95 965 105M1045 155L1045 200 1055 270 1080 262 1115 265M1055 270L1058 310 1045 340 1035 400 1030 480 1032 505 1020 560 1025 590 1055 600 1055 640 1075 642M1180 300L1155 340 1190 375M1155 340L1145 380`,
    rivers: `M1090 95L1140 95 1175 75 1220 65M1205 240L1180 275 1160 310 1140 330 1135 370`,
    dots: `970 77 13,950 97 8,958 118 9,970 130 9,985 163 14,1000 165 8,995 185 8,1018 202 8,1032 212 7,1045 225 7,1038 275 8,1042 312 6,1031 337 7,1035 372 17,1030 395 12,1025 420 13,1021 445 9,1022 466 8,1010 515 4,1036 602 6,1098 426 15,1166 361 14,1206 337 15,1213 308 14,1199 291 14,1245 271 14,1275 265 13,1300 232 13,1264 226 15,1222 202 15,1235 202 13,1288 174 12,1328 150 9,1330 135 11,1325 118 14,1308 108 11,1258 105 8,1279 131 7,1231 153 7,1173 77 9,1078 90 9,1111 85 6,1100 161 9,1100 204 9,1157 173 12,1175 247 8,1142 272 8,1035 140 6,1200 53 5,983 30 8,1135 594 5,352 220 6,155 183 3,173 188 3,185 91 3,127 250 3,70 220 4,42 454 9,1005 97 4,1022 178 5,1010 190 5,980 145 7,1042 195 4,1010 50 3,1145 22 3` },
  { x: 1130, y: 960, sx: .4592, sy: .354,
    land: `M120-5L395-5 385 35 345 85 335 120 340 160 335 200 300 235 305 265 285 310 255 365 225 375 195 388 185 350 180 310 150 235 148 205 155 150 150 105 125 65 130 20ZM400 170L405 195 385 280 370 293 360 280 362 240 370 205ZM710 15L735 40 760 75 780 95 780 112 760 100 735 70ZM735-2L755-2 775 45 770 55 745 30ZM778 120L810 125 845 130 842 136 800 132ZM805 55L830 35 850 0 862 5 860 50 850 90 830 95 812 85ZM872 75L880 60 900 65 895 72 882 78 893 108 884 108 878 88 874 108ZM850 136L910 138 912 142 850 140ZM950 68L970 80 990 90 1015 82 1045 100 1060 125 1080 152 1060 150 1040 140 1015 145 1000 125 975 105 955 80ZM1070 110l25-10-15 18Z
M835 270L850 255 885 240 895 215 915 190 925 195 948 170 985 168 985 190 1010 220 1018 215 1028 155 1045 190 1055 235 1085 280 1100 310 1098 350 1085 400 1060 430 1030 430 1005 400 1000 385 990 375 970 380 975 360 950 352 900 375 870 378 865 390 845 383 848 345 835 300ZM1043 457l24 3-5 25-12 2ZM1227 465L1215 485 1192 515 1210 525 1227 495ZM528 556l12 2-6 8Z
M-8 980L15 955 25 975 45 950 60 975 90 940 145 945 225 945 290 925 295 900 325 932 350 895 385 870 430 838 455 870 535 883 527 935 548 970 565 930 600 885 650 858 740 845 815 857 830 840 885 862 945 860 975 842 1045 865 1060 890 1120 905 1160 945 1215 970 1215 1000 1180 1050 1165 1080 1170 1160 1180 1215 1150 1245 1150 1350 1165 1450-8 1450Z`,
    water: `M280 62l12 0 0 20-12 0ZM265 90l4 0 3 40-5 0ZM293 148l5 0 5 45-5 0Z`,
    borders: `M130 45H190L195 10M160 45V95L150 105M150 115L185 115 195 135 210 125 215 165 255 175 255 195 215 215 148 215M275 30L275 70 265 120 280 140 260 150 260 180M300 70H275M300 70L330 105M300 0L300 30 345 30 345 75M300 160H340M290 140L300 185 270 200 235 218 208 220V300L180 325M270 200L290 210 285 255 260 262 240 220M260 262L235 290 205 305M272 295l8 0 4 12-8 6-5-10ZM250 330l8-8 6 8-8 16-7-6ZM260 262L280 265 285 310M1018 82V145M812 45L835 50 850 20 862 22`,
    rivers: `M195 45L225 42 240 75 248 110M1005 385L1040 385 1060 405 1080 400`,
    dots: `438 250 13,559 31 8,219 343 10,232 262 6,261 231 5,278 303 5,256 333 4,253 175 5,300 118 4,210 96 3,182 160 3,318 61 4,284 47 4,143 28 6,140 68 4,172 62 4,108 59 3,266 84 5,306 230 4,190 268 3,381 229 4,357 163 3,438 101 3,369 173 3,452 243 3,835 69 18,765 50 15,752 30 14,745 8 14,757 15 10,848 8 12,840 22 8,808 47 6,949 170 7,1098 312 14,1086 377 15,1043 419 15,1071 396 7,1001 388 8,1060 478 7,846 353 5,1035 116 6,1146 146 5,1184 247 9,1191 198 3,911 141 4,205 2 3,275 2 4` }
];
const oceans = [[719, 555, 'Arctic'], [719, 571, 'Ocean'], [1568, 534, 'Arctic'], [1568, 550, 'Ocean'], [716, 883, 'North Pacific'], [716, 899, 'Ocean'],
  [1045, 864, 'North Atlantic'], [1045, 880, 'Ocean'], [746, 1092, 'South Pacific'], [746, 1108, 'Ocean'], [1109, 1106, 'South Atlantic'], [1109, 1122, 'Ocean'],
  [1399, 1065, 'Indian'], [1399, 1081, 'Ocean'], [1287, 1242, 'Southern'], [1287, 1258, 'Ocean'], [588, 873, 'ific'], [1662, 874, 'North Pac'], [1674, 890, 'Ocean']];
const lands = [[852, 796, 'NORTH'], [852, 818, 'AMERICA'], [1236, 803, 'EUROPE'], [1459, 829, 'ASIA'], [1231, 953, 'AFRICA'],
  [986, 1010, 'SOUTH'], [986, 1032, 'AMERICA'], [1580, 1069, 'AUSTRALIA'], [1262, 1361, 'ANTARCTICA']];

define('world-map', `
<style>
  :host { display: block; position: relative; min-height: 0; box-sizing: border-box; background: #222; border: 1px solid #363636; overflow: hidden; }
  svg.map { display: block; width: 100%; height: 100%; }
  .ocean { font: italic 400 13px "Liberation Sans", sans-serif; letter-spacing: 1px; fill: #5293cd; }
  .cont { font: 400 13px "Liberation Sans", sans-serif; letter-spacing: 4px; fill: #bcbcbc; }
  .note { position: absolute; left: 0; right: 0; bottom: 0; display: flex; justify-content: space-between; padding: 0 6px;
          background: rgba(36,36,36,.8); color: #d8d8d8; font-size: 14px; line-height: 17px; }
  .legend { position: absolute; top: 15px; right: 15px; width: 36px; height: 34px; padding: 0; background: #222; border: 1px solid #3a8fd9; color: #3a8fd9; display: grid; place-items: center; }
  .zoom { position: absolute; right: 16px; bottom: 33px; width: 35px; display: flex; flex-direction: column; background: #252525; }
  .zoom button { height: 35px; padding: 0; border: 0; background: none; color: #a0a0a0; display: grid; place-items: center; }
  .zoom button + button { border-top: 1px solid #555; }
</style>
<svg class="map" viewBox="435 377 1401 1093" preserveAspectRatio="xMidYMin slice" role="img" aria-label="World map of cases">
  <defs>
    <clipPath id="frame"><rect x="577" y="424" width="1117" height="1050"/></clipPath>
    <filter id="coast" x="0" y="0" width="100%" height="100%"><feTurbulence type="fractalNoise" baseFrequency=".2" numOctaves="2" seed="4"/><feDisplacementMap in="SourceGraphic" scale="8" xChannelSelector="R" yChannelSelector="G"/></filter>
  </defs>
  <g clip-path="url(#frame)">
    <rect x="577" y="424" width="1117" height="1050" fill="#000e18"/>
    <g id="terrain" filter="url(#coast)"></g><g id="lines"></g><g id="names"></g><g id="dots" fill="#e60000" fill-opacity=".8"></g>
  </g>
</svg>
<button class="legend" type="button" aria-label="Legend"><svg width="18" height="18" viewBox="0 0 18 18" fill="currentColor"><path d="M1 1h4v4H1zM1 5.500h4v3.500H1zM1 10h4v3H1zM1 17l2-3 2 3z"/><path d="M7 3H17M7 7H17M7 11.500H17M7 16H17" stroke="currentColor" stroke-width="1.200"/></svg></button>
<div class="zoom">
  <button type="button" aria-label="Zoom in"><svg width="16" height="16" viewBox="0 0 16 16"><path d="M0 8H16M8 0V16" stroke="currentColor" stroke-width="1.500"/></svg></button>
  <button type="button" aria-label="Zoom out"><svg width="16" height="16" viewBox="0 0 16 16"><path d="M0 8H16" stroke="currentColor" stroke-width="1.500"/></svg></button>
</div>
<div class="note"><span>Esri, FAO, NOAA</span><span>Powered by Esri</span></div>
`, (host, root) => {
  const get = id => root.getElementById(id);
  const wrap = (p, inner) => `<g transform="translate(${p.x} ${p.y}) scale(${p.sx} ${p.sy})">${inner}</g>`;
  const line = 'fill="none" vector-effect="non-scaling-stroke"';
  get('terrain').innerHTML = '<rect x="577" y="424" width="1117" height="1050" fill="#000e18"/>' +
    mapParts.map(p => wrap(p, `<path d="${p.land}" fill="#2a2a28"/><path d="${p.water}" fill="#000e18"/>`)).join('');
  get('lines').innerHTML = mapParts.map(p => wrap(p,
    `<path ${line} d="${p.rivers}" stroke="#1b1e26"/><path ${line} d="${p.borders}" stroke="#67626f"/>`)).join('');
  get('names').innerHTML = oceans.map(([x, y, t]) => `<text class="ocean" x="${x}" y="${y}" text-anchor="middle">${t}</text>`).join('') +
    lands.map(([x, y, t]) => `<text class="cont" x="${x}" y="${y}" text-anchor="middle">${t}</text>`).join('');
  get('dots').innerHTML = mapParts.map(p => p.dots.split(',').map(d => {
    const [x, y, r] = d.trim().split(' ').map(Number);
    return `<circle cx="${(p.x + x * p.sx).toFixed(1)}" cy="${(p.y + y * p.sy).toFixed(1)}" r="${(r * .36).toFixed(1)}"/>`;
  }).join('')).join('');
});

/* ---------- page ---------- */
define('covid-dashboard', `
<style>
  :host { display: flex; flex-direction: column; height: 100vh; box-sizing: border-box; padding: 10px 10px 0; }
  main { flex: 1; min-height: 0; margin-top: 8px; display: grid; grid-template-columns: 415fr 1403fr 705fr; column-gap: 9px; }
  section { display: flex; flex-direction: column; min-width: 0; min-height: 0; }
  .top { height: 176px; margin-bottom: 9px; }
  .cards { display: grid; grid-template-columns: 450fr 416fr 519fr; gap: 9px; grid-template-rows: 176px 114px; margin-bottom: 9px; }
  .grow { flex: 1; }
  .charts { flex: 1; min-height: 0; box-sizing: border-box; background: #222; border: 1px solid #363636; display: grid; grid-template-rows: repeat(3, minmax(0, 1fr)); }
  footer { height: 2px; margin: 9px -10px 0; background: linear-gradient(90deg, #11406c 149px, #1c5c96 149px 181px, #11406c 181px); }
</style>
<dash-header></dash-header>
<main>
  <section>
    <stat-card class="top" size="date"><span slot="label">Last Updated at (M/D/YYYY)</span>27.2.2022, 08:21</stat-card>
    <country-list class="grow"></country-list>
    <tab-strip items="Admin0|Admin1|Admin2"></tab-strip>
  </section>
  <section>
    <div class="cards">
      <stat-card tone="red"><span slot="label">Total Cases</span>434.263.573</stat-card>
      <stat-card size="xl"><span slot="label">Total Deaths</span>5.944.415</stat-card>
      <stat-card size="m" tone="green"><span slot="label">Total Vaccine Doses Administered</span>10.477.617.202</stat-card>
      <stat-card size="row" tone="red"><span slot="label">28-Day Cases</span>61.269.403</stat-card>
      <stat-card size="row"><span slot="label">28-Day Deaths</span>286.851</stat-card>
      <stat-card size="wide" tone="green"><span slot="label">28-Day Vaccine Doses Administered</span>684.558.435</stat-card>
    </div>
    <world-map class="grow"></world-map>
    <tab-strip items="28-Day|Totals|Incidence|Case-Fatality Ratio|Global Vaccinations|US Vaccinations|Terms of Use"></tab-strip>
  </section>
  <section>
    <div class="charts">
      <weekly-chart label="Weekly Cases" color="#e60000" unit="M" max="25" step="5" scale="1208" left="92" top="22" base="425" mid="224" marks="212 352 490 630">
        4 4 4 4 4 4 4 9 15 25 32 35 32 32 32 35 35 38 42 48 48 55 64 71 74 81 90 94 94 94 91 94 97 97 103 103 106 116 126 149 175 195 201 209 205 215 257 225 198 218 254 237 208 185 162 139 129 136 139 149 168 195 205 234 264 283 280 270 234 201 172 149 132 126 129 136 152 179 185 208 218 225 228 228 215 195 188 169 155 149 142 149 155 159 172 188 198 215 215 225 274 492 836 1010 1131 1122 984 791 624
      </weekly-chart>
      <weekly-chart label="Weekly Deaths" color="#ffffff" unit="k" max="120" step="20" scale="1294" left="95" top="14" base="445" mid="230" marks="213 353 490 630">
        0 9 13 16 13 13 16 36 98 233 418 530 536 485 436 413 379 363 340 357 360 409 367 373 406 445 452 469 481 471 452 439 422 458 415 415 439 442 413 452 510 625 684 759 785 841 844 890 795 860 1004 1057 1093 1090 985 900 759 740 703 677 733 782 795 942 939 1011 1044 1014 959 936 857 795 821 677 618 592 608 615 756 700 723 740 759 756 733 680 667 618 589 543 517 540 556 536 553 553 540 618 553 527 500 478 497 559 615 720 818 814 775
      </weekly-chart>
      <weekly-chart label="Weekly Doses Administered" color="#38a800" unit="M" max="350" step="50" scale="1201" left="99" top="33" base="434" mid="234" marks="216 356 492 630">
        0 0 0 0 0 0 0 0 0 0 0 0 0 0 0 0 0 0 0 0 0 0 0 0 0 0 0 0 0 0 0 0 0 0 0 0 0 0 0 0 0 0 0 0 0 0 0 14 11 35 50 60 83 119 113 152 122 169 175 247 257 365 395 437 407 410 486 476 584 686 771 842 800 845 1121 934 878 738 748 1029 1010 852 895 967 848 791 767 653 709 608 529 647 512 1013 781 797 797 898 908 898 784 885 836 702 614 578 889 519 548
      </weekly-chart>
    </div>
    <tab-strip items="Weekly|28-Day"></tab-strip>
  </section>
</main>
<footer></footer>
`);
</script>
</body>
</html>
